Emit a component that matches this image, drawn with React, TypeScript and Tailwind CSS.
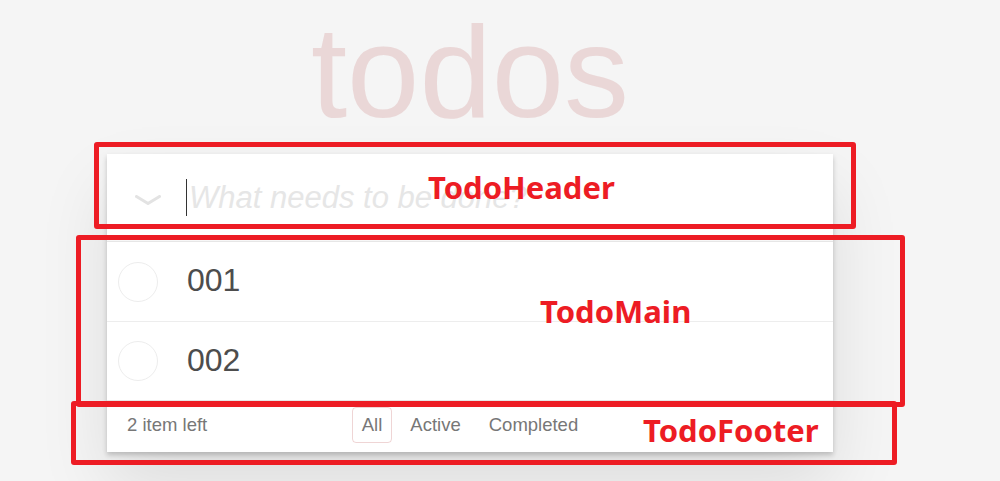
import React from "react";

const items = ["001", "002"];

function Chevron() {
  return (
    <svg width="26" height="10" viewBox="0 0 26 10" className="block">
      <polyline points="1.5,1.5 13,8.5 24.5,1.5" fill="none" stroke="#e3e3e3" strokeWidth="3" strokeLinecap="round" strokeLinejoin="round" />
    </svg>
  );
}

export default function App() {
  return (
    <div className="relative w-full h-[481px] overflow-hidden bg-[#f5f5f5] font-['Liberation_Sans',Arial,sans-serif]">
      <div className="ml-[107px] w-[726px] pt-[7px]">
        <h1 className="text-center text-[130px] leading-none font-normal text-[#ead7d7] h-[130px]">todos</h1>
        <div className="mt-[17px] bg-white shadow-[0_3px_5px_0_rgba(0,0,0,0.2),0_33px_66px_0_rgba(0,0,0,0.1)]">
          {/* header */}
          <div className="flex items-center h-[87px] shadow-[inset_0_-3px_1px_rgba(0,0,0,0.03)]">
            <div className="w-[79px] flex justify-center pl-[2px]">
              <div className="mt-[4px]"><Chevron /></div>
            </div>
            <div className="flex items-center">
              <span className="block w-px h-[37px] bg-[#333] mr-[2px]" />
              <span className="italic text-[31px] text-[#e6e6e6] leading-none">What needs to be done?</span>
            </div>
          </div>
          {/* main */}
          <ul className="border-t border-[#e6e6e6]">
            {items.map((t, i) => (
              <li key={t} className={`flex items-center h-[79px] ${i > 0 ? "border-t border-[#ededed]" : ""}`}>
                <div className="w-[80px] flex items-center pl-[11px]">
                  <span className="block w-[40px] h-[40px] rounded-full border border-[#ededed]" />
                </div>
                <span className="text-[32px] text-[#4d4d4d] leading-none -mt-[3px]">{t}</span>
              </li>
            ))}
          </ul>
          {/* footer */}
          <div className="relative flex items-center h-[52px] border-t border-[#e6e6e6] px-[20px] text-[18.5px] text-[#777]">
            <span className="-mt-[3px]">2 item left</span>
            <ul className="absolute left-0 right-0 flex justify-center -mt-[3px]">
              <li className="mx-[4px]"><span className="block px-[9px] py-[3px] border border-[rgba(175,47,47,0.2)] rounded-[4px]">All</span></li>
              <li className="mx-[4px]"><span className="block px-[9px] py-[3px] border border-transparent rounded-[4px]">Active</span></li>
              <li className="mx-[4px]"><span className="block px-[9px] py-[3px] border border-transparent rounded-[4px]">Completed</span></li>
            </ul>
          </div>
        </div>
      </div>

      {/* annotation boxes */}
      <div className="absolute left-[94px] top-[142px] w-[762px] h-[87px] border-[5px] border-[#ed1c24] rounded-[3px]" />
      <div className="absolute left-[76px] top-[235px] w-[829px] h-[172px] border-[5px] border-[#ed1c24] rounded-[3px]" />
      <div className="absolute left-[71px] top-[401px] w-[826px] h-[64px] border-[5px] border-[#ed1c24] rounded-[3px]" />

      <div className="absolute left-[428px] top-[172px] text-[31px] leading-none font-bold text-[#ed1c24] font-['Noto_Sans',sans-serif]">TodoHeader</div>
      <div className="absolute left-[540px] top-[296px] text-[31px] leading-none font-bold text-[#ed1c24] font-['Noto_Sans',sans-serif]">TodoMain</div>
      <div className="absolute left-[643px] top-[415px] text-[31px] leading-none font-bold text-[#ed1c24] font-['Noto_Sans',sans-serif]">TodoFooter</div>
    </div>
  );
}
